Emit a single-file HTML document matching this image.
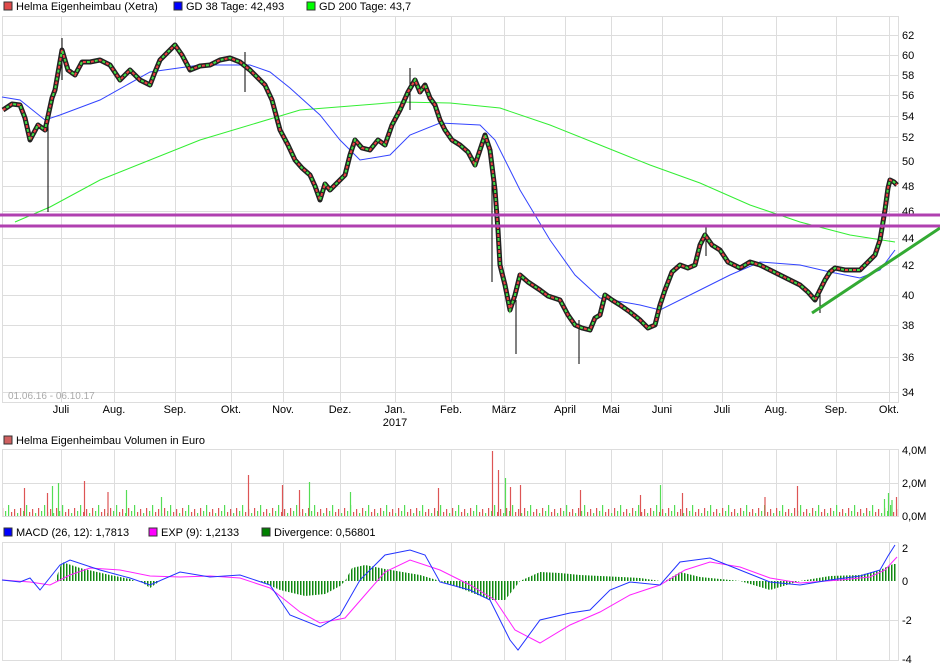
<!DOCTYPE html>
<html><head><meta charset="utf-8"><style>
body{margin:0;background:#fff;width:940px;height:670px;overflow:hidden}
svg{display:block;font-family:"Liberation Sans",sans-serif}
</style></head><body>
<svg width="940" height="670" xmlns="http://www.w3.org/2000/svg">
<defs>
<pattern id="hp" x="0" y="0" width="3" height="10" patternUnits="userSpaceOnUse"><rect x="0" y="0" width="1.5" height="10" fill="#118811"/></pattern>
<pattern id="vp" x="2" y="496" width="18" height="20" patternUnits="userSpaceOnUse">
<rect x="0" y="12" width="1.2" height="8" fill="#dd5555"/><rect x="3" y="15" width="1.2" height="5" fill="#55dd55"/>
<rect x="6" y="9" width="1.2" height="11" fill="#55dd55"/><rect x="9" y="16" width="1.2" height="4" fill="#dd5555"/>
<rect x="12" y="13" width="1.2" height="7" fill="#dd5555"/><rect x="15" y="17" width="1.2" height="3" fill="#55dd55"/>
</pattern>
</defs>
<g font-size="11" fill="#000">
<rect x="4" y="2" width="8" height="8" fill="#e04a4a" stroke="#333"/><text x="16" y="10">Helma Eigenheimbau (Xetra)</text>
<rect x="174" y="2" width="8" height="8" fill="#0000ff" stroke="#333"/><text x="186" y="10">GD 38 Tage: 42,493</text>
<rect x="307" y="2" width="8" height="8" fill="#00ff00" stroke="#333"/><text x="319" y="10">GD 200 Tage: 43,7</text>
<rect x="4" y="436" width="8" height="8" fill="#d06060" stroke="#333"/><text x="16" y="444">Helma Eigenheimbau Volumen in Euro</text>
<rect x="4" y="528" width="8" height="8" fill="#0000ff" stroke="#333"/><text x="16" y="536">MACD (26, 12): 1,7813</text>
<rect x="149" y="528" width="8" height="8" fill="#ff00ff" stroke="#333"/><text x="161" y="536">EXP (9): 1,2133</text>
<rect x="262" y="528" width="8" height="8" fill="#008000" stroke="#333"/><text x="274" y="536">Divergence: 0,56801</text>
</g>
<g stroke="#ddd" stroke-width="1" fill="none">
<rect x="2.5" y="16.5" width="896" height="386"/>
<rect x="2.5" y="449.5" width="896" height="67"/>
<rect x="2.5" y="542.5" width="896" height="118"/>
<path d="M61.5 16V402M114.5 16V402M175.5 16V402M231.5 16V402M283.5 16V402M340.5 16V402M395.5 16V402M451.5 16V402M504.5 16V402M565.5 16V402M611.5 16V402M662.5 16V402M722.5 16V402M776.5 16V402M836.5 16V402M889.5 16V402"/>
<path d="M61.5 449V516M114.5 449V516M175.5 449V516M231.5 449V516M283.5 449V516M340.5 449V516M395.5 449V516M451.5 449V516M504.5 449V516M565.5 449V516M611.5 449V516M662.5 449V516M722.5 449V516M776.5 449V516M836.5 449V516M889.5 449V516"/>
<path d="M61.5 542V660M114.5 542V660M175.5 542V660M231.5 542V660M283.5 542V660M340.5 542V660M395.5 542V660M451.5 542V660M504.5 542V660M565.5 542V660M611.5 542V660M662.5 542V660M722.5 542V660M776.5 542V660M836.5 542V660M889.5 542V660"/>
<path d="M2 35.5H898M2 55.5H898M2 75.5H898M2 95.5H898M2 116.5H898M2 137.5H898M2 161.5H898M2 186.5H898M2 211.5H898M2 238.5H898M2 265.5H898M2 295.5H898M2 325.5H898M2 357.5H898M2 392.5H898M2 483.5H898M2 620.5H898"/>
</g>
<g font-size="11" fill="#000">
<text x="902" y="39">62</text><text x="902" y="59">60</text><text x="902" y="79">58</text><text x="902" y="99">56</text><text x="902" y="120">54</text><text x="902" y="141">52</text><text x="902" y="165">50</text><text x="902" y="190">48</text><text x="902" y="215">46</text><text x="902" y="242">44</text><text x="902" y="269">42</text><text x="902" y="299">40</text><text x="902" y="329">38</text><text x="902" y="361">36</text><text x="902" y="396">34</text>
<text x="902" y="454">4,0M</text><text x="902" y="487">2,0M</text><text x="902" y="520">0,0M</text>
<text x="902" y="552">2</text><text x="902" y="585">0</text><text x="902" y="624">-2</text><text x="902" y="663">-4</text>
<g text-anchor="middle"><text x="61" y="413">Juli</text><text x="114" y="413">Aug.</text><text x="175" y="413">Sep.</text><text x="231" y="413">Okt.</text><text x="283" y="413">Nov.</text><text x="340" y="413">Dez.</text><text x="395" y="413">Jan.</text><text x="451" y="413">Feb.</text><text x="504" y="413">März</text><text x="565" y="413">April</text><text x="611" y="413">Mai</text><text x="662" y="413">Juni</text><text x="722" y="413">Juli</text><text x="776" y="413">Aug.</text><text x="836" y="413">Sep.</text><text x="889" y="413">Okt.</text><text x="395" y="426">2017</text></g>
<text x="8" y="399" font-size="10" fill="#aaa">01.06.16 - 06.10.17</text>
</g>
<polyline fill="none" stroke="#33ee33" points="15,222 50,207 100,180 200,140 300,110 400,102 450,103 500,108 550,125 600,145 650,165 700,183 750,205 800,222 850,235 895,242"/>
<polyline fill="none" stroke="#3344ff" points="2,97 20,100 45,120 60,115 100,100 150,72 200,65 250,65 270,72 290,88 320,115 340,140 360,160 390,155 410,135 440,123 480,125 495,140 520,190 550,240 575,275 600,298 640,305 660,310 700,290 730,275 760,262 800,265 830,272 860,278 880,270 895,250"/>
<g fill="none" stroke="#000">
<path d="M48 120V212M516 300V354M579 320V364M492 180V282M62 38V80M245 52V92M410 68V110M706 226V256M820 285V313"/>
</g>
<polyline fill="none" stroke="#222" stroke-width="5" stroke-linejoin="round" points="3,110 12,104 20,105 25,118 30,140 38,125 45,130 52,98 55,90 62,50 68,70 75,75 82,62 90,62 100,60 110,65 120,80 130,70 140,80 150,85 155,72 160,60 168,52 175,45 182,55 190,70 200,66 210,65 220,60 230,58 240,62 250,70 258,78 265,85 272,100 280,130 288,145 295,160 302,168 310,175 315,186 320,200 325,184 330,190 338,182 345,175 350,155 355,140 362,148 370,150 378,140 385,145 392,125 400,110 408,92 415,80 420,92 425,85 430,98 435,105 440,120 445,130 452,140 460,145 468,152 475,165 480,150 485,135 490,150 495,190 498,230 500,265 505,285 510,310 515,295 520,275 528,282 540,290 548,296 560,300 568,315 575,325 582,328 590,330 595,318 600,315 605,295 612,300 620,305 630,312 640,320 648,328 655,325 660,305 665,290 672,272 680,265 688,268 695,265 700,245 705,235 712,245 720,250 728,262 740,268 750,262 760,265 770,270 780,275 790,280 800,285 808,292 815,300 820,290 825,280 830,272 835,268 845,270 860,270 868,262 875,255 880,240 885,210 888,188 890,180 894,182 897,185"/>
<polyline fill="none" stroke="#ee4444" stroke-width="2" stroke-dasharray="3 5" points="3,110 12,104 20,105 25,118 30,140 38,125 45,130 52,98 55,90 62,50 68,70 75,75 82,62 90,62 100,60 110,65 120,80 130,70 140,80 150,85 155,72 160,60 168,52 175,45 182,55 190,70 200,66 210,65 220,60 230,58 240,62 250,70 258,78 265,85 272,100 280,130 288,145 295,160 302,168 310,175 315,186 320,200 325,184 330,190 338,182 345,175 350,155 355,140 362,148 370,150 378,140 385,145 392,125 400,110 408,92 415,80 420,92 425,85 430,98 435,105 440,120 445,130 452,140 460,145 468,152 475,165 480,150 485,135 490,150 495,190 498,230 500,265 505,285 510,310 515,295 520,275 528,282 540,290 548,296 560,300 568,315 575,325 582,328 590,330 595,318 600,315 605,295 612,300 620,305 630,312 640,320 648,328 655,325 660,305 665,290 672,272 680,265 688,268 695,265 700,245 705,235 712,245 720,250 728,262 740,268 750,262 760,265 770,270 780,275 790,280 800,285 808,292 815,300 820,290 825,280 830,272 835,268 845,270 860,270 868,262 875,255 880,240 885,210 888,188 890,180 894,182 897,185"/>
<polyline fill="none" stroke="#44dd44" stroke-width="2" stroke-dasharray="3 5" stroke-dashoffset="4" points="3,110 12,104 20,105 25,118 30,140 38,125 45,130 52,98 55,90 62,50 68,70 75,75 82,62 90,62 100,60 110,65 120,80 130,70 140,80 150,85 155,72 160,60 168,52 175,45 182,55 190,70 200,66 210,65 220,60 230,58 240,62 250,70 258,78 265,85 272,100 280,130 288,145 295,160 302,168 310,175 315,186 320,200 325,184 330,190 338,182 345,175 350,155 355,140 362,148 370,150 378,140 385,145 392,125 400,110 408,92 415,80 420,92 425,85 430,98 435,105 440,120 445,130 452,140 460,145 468,152 475,165 480,150 485,135 490,150 495,190 498,230 500,265 505,285 510,310 515,295 520,275 528,282 540,290 548,296 560,300 568,315 575,325 582,328 590,330 595,318 600,315 605,295 612,300 620,305 630,312 640,320 648,328 655,325 660,305 665,290 672,272 680,265 688,268 695,265 700,245 705,235 712,245 720,250 728,262 740,268 750,262 760,265 770,270 780,275 790,280 800,285 808,292 815,300 820,290 825,280 830,272 835,268 845,270 860,270 868,262 875,255 880,240 885,210 888,188 890,180 894,182 897,185"/>
<rect x="0" y="213.5" width="940" height="3" fill="#b040b0"/>
<rect x="0" y="224.5" width="940" height="3" fill="#b040b0"/>
<line x1="812" y1="313" x2="940" y2="228" stroke="#33aa33" stroke-width="3"/>
<rect x="3" y="496" width="895" height="20" fill="url(#vp)"/>
<g stroke-width="1.2">
<path stroke="#dd5555" d="M24.5 516V488M47.5 516V493M84.5 516V481M108 516V492M248.5 516V475M282.5 516V485M299.5 516V490M438.5 516V488M492.5 516V451M498.5 516V470M510.5 516V487M520.5 516V485M580.5 516V490M640.5 516V495M682.5 516V493M765 516V497M797.5 516V486M896.5 516V497"/>
<path stroke="#55dd55" d="M52.5 516V486M58.5 516V483M126.5 516V490M161.5 516V497M309.5 516V482M350.5 516V492M505.5 516V478M660.5 516V485M884.5 516V499M888.5 516V493M892 516V500"/>
</g>
<polygon fill="url(#hp)" points="55,581 62,562 80,568 110,575 130,579 135,581"/>
<polygon fill="url(#hp)" points="140,581 150,588 160,581"/>
<polygon fill="url(#hp)" points="260,581 280,590 305,596 325,594 340,586 345,581"/>
<polygon fill="url(#hp)" points="345,581 352,568 365,565 385,569 420,575 440,581"/>
<polygon fill="url(#hp)" points="440,581 465,590 490,600 505,600 520,581"/>
<polygon fill="url(#hp)" points="520,581 540,572 560,573 580,575 640,578 660,581"/>
<polygon fill="url(#hp)" points="665,581 680,572 700,577 740,581"/>
<polygon fill="url(#hp)" points="740,581 770,590 800,581"/>
<polygon fill="url(#hp)" points="800,581 830,576 860,575 880,570 893,564 897,564 897,581"/>
<polyline fill="none" stroke="#ff22ff" points="2,580 30,582 50,585 70,575 90,568 120,570 150,576 180,577 210,576 240,578 270,588 300,612 320,623 345,618 365,595 385,572 410,560 440,570 470,585 495,600 515,630 540,643 570,625 600,612 630,595 660,585 685,570 710,562 740,567 770,578 800,583 840,580 870,577 885,570 897,557"/>
<polyline fill="none" stroke="#2233ff" points="2,580 20,582 30,578 40,590 60,565 70,560 100,570 130,578 150,585 180,572 210,577 240,575 270,585 290,615 320,627 340,615 360,580 385,555 410,550 425,555 440,582 470,590 490,600 510,640 518,650 540,620 570,613 590,610 610,590 630,582 660,585 680,562 710,558 740,570 770,582 800,585 830,580 860,576 880,570 888,556 895,545"/>
</svg>
</body></html>
